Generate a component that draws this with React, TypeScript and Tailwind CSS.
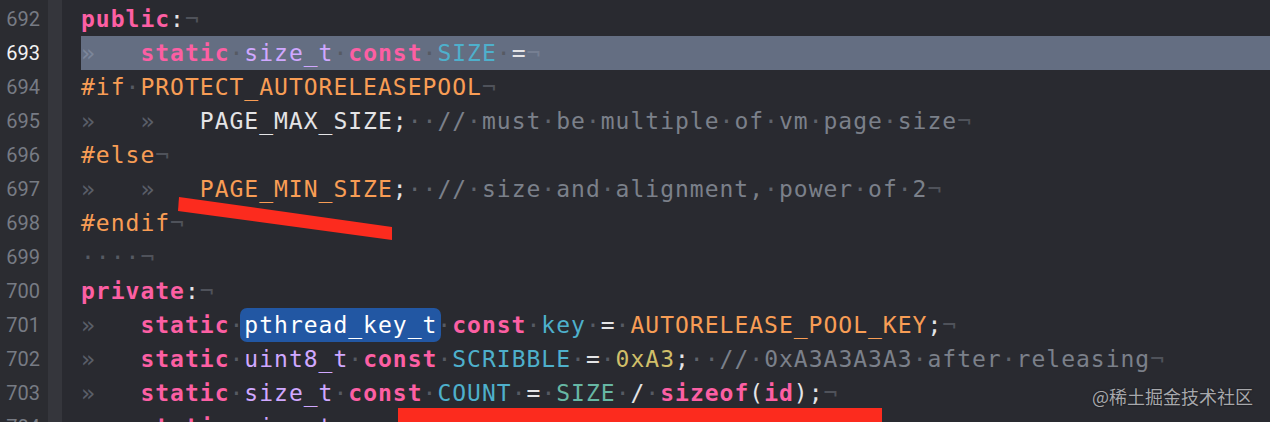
import React from "react";

type Tok = [string, string];

const C: Record<string, string> = {
  kw: "text-[#fc5fa3] font-bold",
  ty: "text-[#d0a8ff]",
  de: "text-[#4eb0cc]",
  pv: "text-[#67b7a4]",
  pp: "text-[#f89d55]",
  pl: "text-[#e4e4e6]",
  cm: "text-[#7b808a]",
  nu: "text-[#d0bf69]",
  sel: "inline-block bg-[#2257a3] rounded-[7px] px-[4px] -mx-[4px] text-white",
};

const TAB: Tok = ["\t", "tab"];
const EOL: Tok = ["\n", "eol"];

const lines: { n: number; toks: Tok[]; hl?: boolean }[] = [
  { n: 692, toks: [["public", "kw"], [":", "pl"], EOL] },
  {
    n: 693,
    hl: true,
    toks: [TAB, ["static", "kw"], [" ", "pl"], ["size_t", "ty"], [" ", "pl"], ["const", "kw"], [" ", "pl"], ["SIZE", "de"], [" =", "pl"], EOL],
  },
  { n: 694, toks: [["#if PROTECT_AUTORELEASEPOOL", "pp"], EOL] },
  {
    n: 695,
    toks: [TAB, TAB, ["PAGE_MAX_SIZE;", "pl"], ["  // must be multiple of vm page size", "cm"], EOL],
  },
  { n: 696, toks: [["#else", "pp"], EOL] },
  {
    n: 697,
    toks: [TAB, TAB, ["PAGE_MIN_SIZE", "pp"], [";", "pl"], ["  // size and alignment, power of 2", "cm"], EOL],
  },
  { n: 698, toks: [["#endif", "pp"], EOL] },
  { n: 699, toks: [["    ", "pl"], EOL] },
  { n: 700, toks: [["private", "kw"], [":", "pl"], EOL] },
  {
    n: 701,
    toks: [TAB, ["static", "kw"], [" ", "pl"], ["pthread_key_t", "sel"], [" ", "pl"], ["const", "kw"], [" ", "pl"], ["key", "de"], [" = ", "pl"], ["AUTORELEASE_POOL_KEY", "pp"], [";", "pl"], EOL],
  },
  {
    n: 702,
    toks: [TAB, ["static", "kw"], [" ", "pl"], ["uint8_t", "ty"], [" ", "pl"], ["const", "kw"], [" ", "pl"], ["SCRIBBLE", "de"], [" = ", "pl"], ["0xA3", "nu"], [";", "pl"], ["  // 0xA3A3A3A3 after releasing", "cm"], EOL],
  },
  {
    n: 703,
    toks: [TAB, ["static", "kw"], [" ", "pl"], ["size_t", "ty"], [" ", "pl"], ["const", "kw"], [" ", "pl"], ["COUNT", "de"], [" = ", "pl"], ["SIZE", "pv"], [" / ", "pl"], ["sizeof", "kw"], ["(", "pl"], ["id", "kw"], [");", "pl"], EOL],
  },
  {
    n: 704,
    toks: [TAB, ["static", "kw"], [" ", "pl"], ["size_t", "ty"], [" ", "pl"], ["const", "kw"], [" ", "pl"], ["MAX_FAULTS", "de"], [" = ", "pl"], ["2", "nu"], [";", "pl"], EOL],
  },
];

function renderText(text: string, cls: string, key: string) {
  const parts: React.ReactNode[] = [];
  let buf = "";
  let i = 0;
  const flush = () => {
    if (buf) {
      parts.push(<span key={key + "-t" + i++}>{buf}</span>);
      buf = "";
    }
  };
  for (const ch of text) {
    if (ch === " ") {
      flush();
      parts.push(
        <span key={key + "-d" + i++} className={cls === "cm" ? "text-[#5f636c]" : "text-[#565a63]"}>
          ·
        </span>
      );
    } else buf += ch;
  }
  flush();
  return (
    <span key={key} className={C[cls]}>
      {parts}
    </span>
  );
}

function Line({ toks, hl }: { toks: Tok[]; hl?: boolean }) {
  return (
    <div className={"h-[34px] leading-[34px] whitespace-pre " + (hl ? "bg-[#646e82]" : "")}>
      {toks.map((t, i) => {
        if (t[1] === "tab")
          return (
            <span key={i} className={"inline-block w-[59.4px] " + (hl ? "text-[#7c869a]" : "text-[#5a5e68]")}>
              »
            </span>
          );
        if (t[1] === "eol")
          return (
            <span key={i} className={hl ? "text-[#767f92]" : "text-[#4f525a]"}>
              ¬
            </span>
          );
        if (t[1] === "sel")
          return (
            <span key={i} className={C.sel}>
              {t[0]}
            </span>
          );
        return renderText(t[0], t[1], "k" + i);
      })}
    </div>
  );
}

export default function App() {
  return (
    <div className="relative w-[1270px] h-[422px] overflow-hidden bg-[#292a30]">
      <div className="flex h-full">
        <div className="w-[48px] bg-[#2b2c31] pt-[2px] font-['Roboto',sans-serif] text-[20px]">
          {lines.map((l) => (
            <div
              key={l.n}
              className={"h-[34px] leading-[34px] text-right pr-[8px] " + (l.hl ? "text-[#f2f2f4]" : "text-[#777b84]")}
            >
              {l.n}
            </div>
          ))}
        </div>
        <div className="w-[14px] bg-[#35363c]" />
        <div className="flex-1 pl-[19px] pt-[2px] font-['DejaVu_Sans_Mono',monospace] text-[23px] tracking-[1px]">
          {lines.map((l) => (
            <Line key={l.n} toks={l.toks} hl={l.hl} />
          ))}
        </div>
      </div>
      <svg className="absolute inset-0 pointer-events-none" width="1270" height="422" viewBox="0 0 1270 422">
        <polygon points="179,197 392,227 392,240 178,211" fill="#fc2b1e" />
        <rect x="398" y="408" width="484" height="14" fill="#fc2b1e" />
      </svg>
      <div className="absolute right-[17px] top-[384px] text-[18px] leading-[24px] text-[#a7a8ac] font-['Noto_Sans_CJK_SC',sans-serif] [text-shadow:0_0_2px_rgba(0,0,0,0.6)]">
        @稀土掘金技术社区
      </div>
    </div>
  );
}
